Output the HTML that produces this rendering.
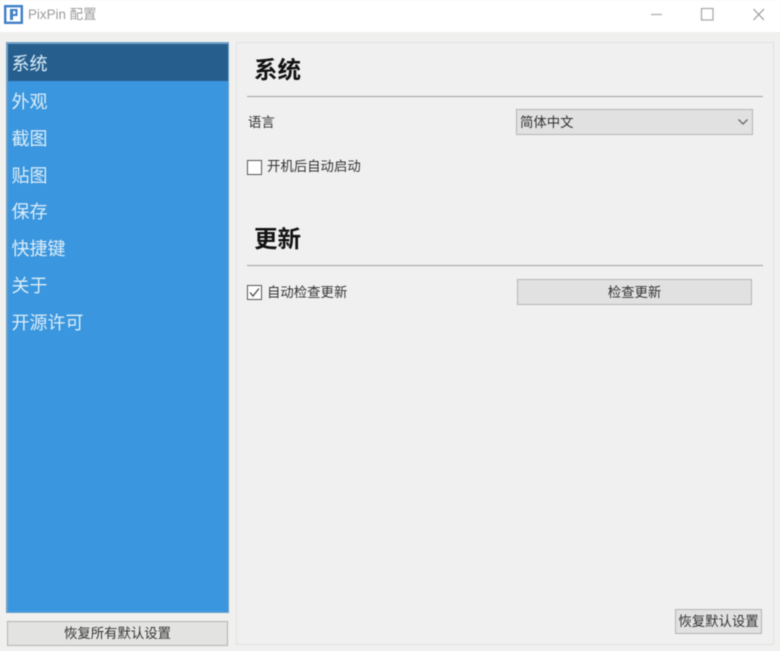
<!DOCTYPE html>
<html lang="zh-CN">
<head>
<meta charset="utf-8">
<style>
html,body{margin:0;padding:0;}
body{width:780px;height:651px;overflow:hidden;position:relative;background:#f0f1ef;font-family:"Liberation Sans","Noto Sans CJK SC",sans-serif;}
#wrap{position:absolute;left:0;top:0;width:780px;height:651px;filter:blur(0.4px);}
.a{position:absolute;white-space:nowrap;}
#tb{left:0;top:0;width:780px;height:32px;background:#fff;}
#side{left:6px;top:42px;background:#3a96de;border:1px solid #6f9fc8;border-top-width:2px;border-left-width:2px;width:220px;height:568px;}
#sel{left:0;top:0;width:220px;height:37px;background:#265f8e;}
.it{left:11.500px;font-size:18px;line-height:24px;color:#dceef9;}
#panel{left:236px;top:42px;width:536px;height:601px;background:#f0f0f0;border:1px solid #e0e0e0;}
.h{left:254px;font-size:23.5px;line-height:30px;font-weight:700;color:#111;}
.ln{left:247px;width:516px;height:1px;background:#a0a0a0;}
.t{font-size:13.4px;line-height:18px;color:#333;}
.btn{box-sizing:border-box;background:#e1e1e1;border:1px solid #b4b4b4;text-align:center;color:#333;font-size:13.4px;}
.cb{box-sizing:border-box;left:247px;width:15px;height:15px;background:#fff;border:1px solid #555;}
</style>
</head>
<body>
<div id="wrap">
<div class="a" id="tb"></div>
<svg class="a" style="left:4px;top:5px" width="20" height="19" viewBox="0 0 20 19">
<path d="M1.200 1.200h16.600v16.600h-16.600z" fill="none" stroke="#3f7fc8" stroke-width="2.400"/>
<path d="M6 4h7.500v7h-4.500v4h-3z" fill="#3f7fc8"/>
<path d="M9 6h2.500v3h-2.500z" fill="#fff"/>
</svg>
<div class="a" style="left:28px;top:6px;font-size:13.4px;line-height:18px;color:#9a9a9a;">PixPin 配置</div>
<svg class="a" style="left:640px;top:0" width="140" height="30" viewBox="0 0 140 30">
<path d="M11 14.500h11" stroke="#aaa" stroke-width="1.200" fill="none"/>
<path d="M61.500 8.500h11.500v11.500h-11.500z" stroke="#aaa" stroke-width="1.300" fill="none"/>
<path d="M113.500 9l10.500 11M124 9l-10.500 11" stroke="#999" stroke-width="1.200" fill="none"/>
</svg>

<div class="a" id="side"><div class="a" id="sel"></div></div>
<div class="a it" style="top:52px">系统</div>
<div class="a it" style="top:90px">外观</div>
<div class="a it" style="top:127px">截图</div>
<div class="a it" style="top:164px">贴图</div>
<div class="a it" style="top:200px">保存</div>
<div class="a it" style="top:237px">快捷键</div>
<div class="a it" style="top:274px">关于</div>
<div class="a it" style="top:311px">开源许可</div>

<div class="a btn" style="left:7px;top:621px;width:221px;height:25px;line-height:23px;background:#e3e4e1;">恢复所有默认设置</div>

<div class="a" id="panel"></div>
<div class="a h" style="top:55px">系统</div>
<div class="a ln" style="top:96px"></div>
<div class="a t" style="left:248px;top:114px">语言</div>
<div class="a" style="box-sizing:border-box;left:516px;top:109px;width:237px;height:26px;background:#e1e1e1;border:1px solid #b4b4b4;"></div>
<div class="a t" style="left:520px;top:114px">简体中文</div>
<svg class="a" style="left:736px;top:117px" width="14" height="10" viewBox="0 0 14 10"><path d="M2.500 2.500l4.500 4.500 4.500-4.500" stroke="#666" stroke-width="1.300" fill="none"/></svg>
<div class="a cb" style="top:160px"></div>
<div class="a t" style="left:267px;top:158px">开机后自动启动</div>

<div class="a h" style="top:224px">更新</div>
<div class="a ln" style="top:265px"></div>
<div class="a cb" style="top:285px"></div>
<svg class="a" style="left:247px;top:285px" width="15" height="15" viewBox="0 0 15 15"><path d="M3 7.500l3 3.500 6-7.500" stroke="#444" stroke-width="1.200" fill="none"/></svg>
<div class="a t" style="left:267px;top:284px">自动检查更新</div>
<div class="a btn" style="left:517px;top:279px;width:235px;height:26px;line-height:25px;">检查更新</div>
<div class="a btn" style="left:675px;top:609px;width:87px;height:25px;line-height:24px;">恢复默认设置</div>
</div>
</body>
</html>
